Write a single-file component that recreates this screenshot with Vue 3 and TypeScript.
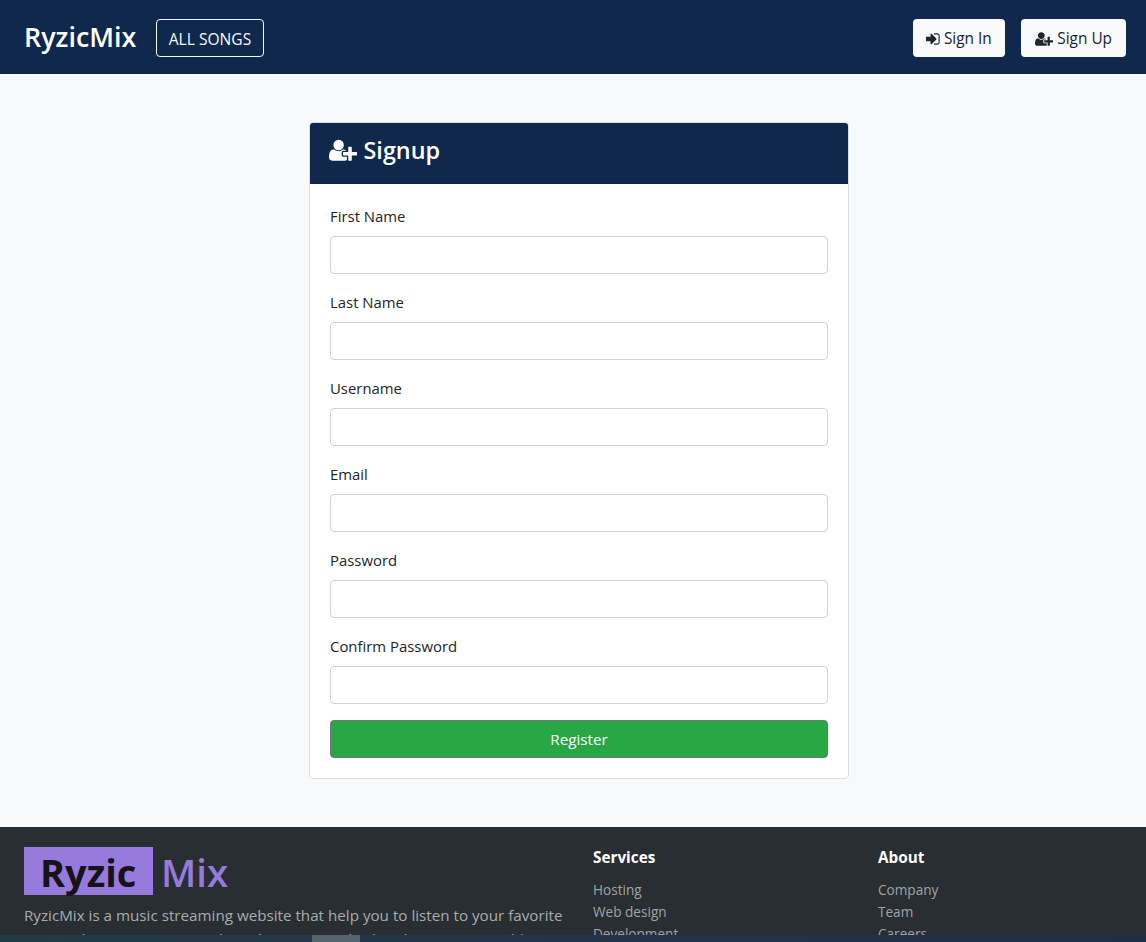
<script setup lang="ts">
interface Field { id: string; label: string; type: string }
const fields: Field[] = [
  { id: 'first', label: 'First Name', type: 'text' },
  { id: 'last', label: 'Last Name', type: 'text' },
  { id: 'user', label: 'Username', type: 'text' },
  { id: 'email', label: 'Email', type: 'email' },
  { id: 'pass', label: 'Password', type: 'password' },
  { id: 'confirm', label: 'Confirm Password', type: 'password' },
]
const columns: { title: string; links: string[] }[] = [
  { title: 'Services', links: ['Hosting', 'Web design', 'Development'] },
  { title: 'About', links: ['Company', 'Team', 'Careers'] },
]
const signInPath = 'M1184 896q0 26-19 45l-544 544q-19 19-45 19t-45-19-19-45v-288h-448q-26 0-45-19t-19-45v-384q0-26 19-45t45-19h448v-288q0-26 19-45t45-19 45 19l544 544q19 19 19 45zm352-352v704q0 119-84.500 203.500t-203.500 84.500h-320q-13 0-22.500-9.500t-9.500-22.500q0-4-1-20t-.5-26.500 3-23.500 10-19.500 20.500-6.500h320q66 0 113-47t47-113v-704q0-66-47-113t-113-47h-312l-11.500-1-11.500-3-8-5.500-7-9-2-13.500q0-4-1-20t-.5-26.500 3-23.500 10-19.500 20.500-6.500h320q119 0 203.500 84.500t84.500 203.500z'
const userPlusPath = 'M704 896q-159 0-271.500-112.500t-112.500-271.500 112.500-271.500 271.500-112.500 271.500 112.500 112.500 271.500-112.500 271.500-271.500 112.500zm960 128h352q13 0 22.500 9.500t9.500 22.500v192q0 13-9.500 22.500t-22.500 9.500h-352v352q0 13-9.500 22.500t-22.500 9.500h-192q-13 0-22.500-9.500t-9.500-22.500v-352h-352q-13 0-22.500-9.500t-9.500-22.500v-192q0-13 9.500-22.500t22.500-9.500h352v-352q0-13 9.500-22.500t22.500-9.500h192q13 0 22.500 9.500t9.500 22.500v352zm-736 224q0 52 38 90t90 38h256v238q-68 50-171 50h-874q-121 0-194-69t-73-190q0-53 3.500-103.500t14-109 26.500-108.500 43-97.500 62-81 85.500-53.500 111.500-20q19 0 39 17 79 61 154.500 91.500t164.500 30.500 164.500-30.500 154.500-91.500q20-17 39-17 132 0 217 96h-223q-52 0-90 38t-38 90v192z'
</script>

<template>
  <div class="page">
    <nav class="navbar">
      <a class="brand">RyzicMix</a>
      <button class="btn outline">ALL SONGS</button>
      <div class="actions">
        <button class="btn light sign-in">
          <svg class="icon-in" viewBox="0 0 1536 1792"><path :d="signInPath" fill="currentColor" /></svg>
          <span>Sign In</span>
        </button>
        <button class="btn light sign-up">
          <svg class="icon-user" viewBox="0 0 2048 1792"><path :d="userPlusPath" fill="currentColor" /></svg>
          <span>Sign Up</span>
        </button>
      </div>
    </nav>

    <main class="content">
      <section class="card">
        <header class="card-header">
          <svg class="icon-title" viewBox="0 0 2048 1792"><path :d="userPlusPath" fill="currentColor" /></svg>
          <h4>Signup</h4>
        </header>
        <form class="card-body" @submit.prevent>
          <div v-for="f in fields" :key="f.id" class="group">
            <label :for="f.id">{{ f.label }}</label>
            <input :id="f.id" :type="f.type" />
          </div>
          <button class="btn register">Register</button>
        </form>
      </section>
    </main>

    <footer class="footer">
      <div class="about">
        <h1 class="logo"><span class="logo-box">Ryzic</span><span class="logo-mix">Mix</span></h1>
        <p>RyzicMix is a music streaming website that help you to listen to your favorite<br />songs. This was a response based on our needs ahead. So You can add</p>
      </div>
      <div v-for="c in columns" :key="c.title" class="col">
        <h3>{{ c.title }}</h3>
        <ul>
          <li v-for="l in c.links" :key="l">{{ l }}</li>
        </ul>
      </div>
    </footer>
    <div class="taskbar"><span class="task"></span></div>
  </div>
</template>

<style>
body { margin: 0; overflow: hidden; }
</style>

<style scoped>
* { box-sizing: border-box; }
.page {
  display: flex; flex-direction: column; height: 942px; overflow: hidden;
  background: #f8f9fb; color: #212529;
  font: 400 14.9px/24px "Open Sans", "Noto Sans", sans-serif;
}
.navbar {
  flex: none; height: 74px; display: flex; align-items: center;
  padding: 2px 20px 0 24px; background: #10284c;
}
.brand { width: 132px; color: #fff; font-size: 26.9px; font-weight: 600; line-height: 36px; padding-bottom: 3px; white-space: nowrap; }
.btn {
  height: 38px; padding: 0; border: 1px solid transparent; border-radius: 4px;
  font: 400 15.4px/24px "Open Sans", "Noto Sans", sans-serif;
  display: flex; align-items: center; justify-content: center; white-space: nowrap;
}
.outline { width: 108px; background: transparent; border-color: #f8f9fa; color: #f8f9fa; font-size: 15.6px; }
.outline, .light { padding-top: 1px; }
.actions { display: flex; gap: 16px; margin-left: auto; }
.light { background: #f8f9fa; color: #212529; gap: 4px; }
.sign-in { width: 92px; }
.sign-up { width: 105px; }
.icon-in { width: 13.7px; height: 16px; }
.icon-user { width: 18.3px; height: 16px; }
.content { flex: none; height: 753px; padding: 48px 0 0 309px; }
.card { width: 540px; height: 657px; background: #fff; border: 1px solid #dcdddf; border-radius: 4px; overflow: hidden; }
.card-header {
  height: 61px; padding: 12px 19px; display: flex; align-items: flex-start; gap: 6.5px;
  background: #10284c; border-bottom: 1px solid #0e2343; color: #fff;
}
.icon-title { width: 28px; height: 24.5px; margin-top: 3px; }
h4 { margin: 0; font-size: 23.4px; line-height: 30px; font-weight: 600; }
.card-body { padding: 20px; }
.group { margin-bottom: 16px; }
label { display: block; height: 24px; margin-bottom: 8px; }
input { display: block; width: 100%; height: 38px; border: 1px solid #ced4da; border-radius: 4px; background: #fff; padding: 6px 12px; }
.register { width: 100%; background: #28a745; border-color: #6c757d; color: #fff; font-size: 15.2px; }
.footer { flex: none; height: 108px; overflow: hidden; display: flex; padding: 20px 24px; background: #292e32; }
.about { flex: none; width: 569px; }
.logo { display: flex; margin: 0; gap: 8px; font-size: 38.3px; line-height: 48px; height: 48px; color: #967adc; }
.logo-box { width: 129px; padding-left: 16px; background: #967adc; color: #161419; font-size: 38px; font-weight: 700; line-height: 50px; height: 48px; }
.logo-mix { font-weight: 600; line-height: 50px; }
p { margin: 8px 0 0; font-size: 15.2px; font-weight: 400; line-height: 24px; color: #a8abae; white-space: nowrap; }
.col { flex: none; width: 285px; }
h3 { margin: 0 0 11px; color: #fff; font-size: 15.3px; font-weight: 700; line-height: 21px; }
ul { margin: 0; padding: 0; list-style: none; }
li { height: 22px; font-size: 13.6px; line-height: 22px; color: #a0a3a6; }
.taskbar { flex: none; height: 7px; background: linear-gradient(90deg, #213b46, #20354a 50%, #1c2f46); padding-left: 312px; }
.task { display: block; width: 48px; height: 7px; background: #53656f; }
</style>
